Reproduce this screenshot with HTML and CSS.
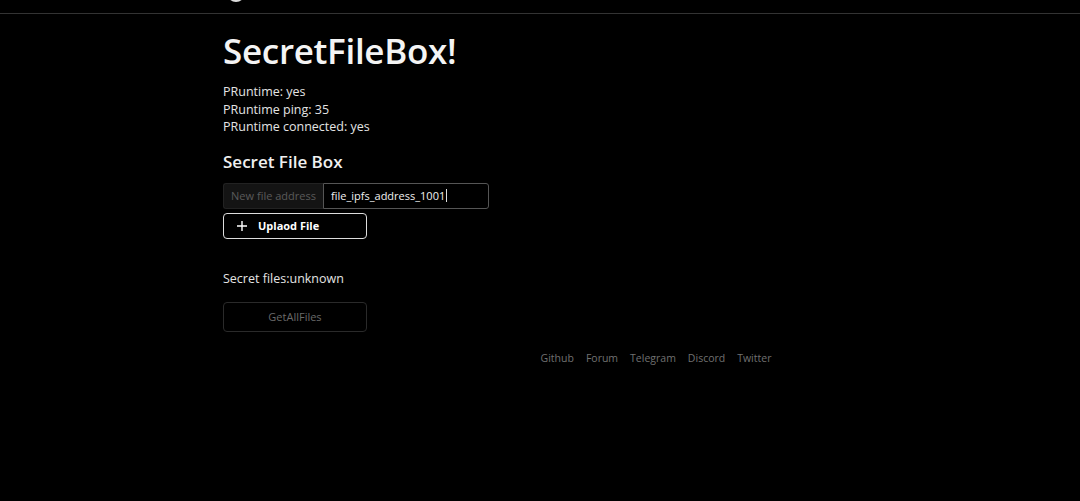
FILE: index.html
```html
<!DOCTYPE html>
<html>
<head>
<meta charset="utf-8">
<link rel="stylesheet" href="styles.css">
</head>
<body>
<header class="topbar">
  <div class="topbar-inner"><span class="logo"></span></div>
</header>
<main class="page">
  <h1 class="title">SecretFileBox!</h1>
  <div class="status">
    <div>PRuntime: yes</div>
    <div>PRuntime ping: 35</div>
    <div>PRuntime connected: yes</div>
  </div>
  <h2 class="section">Secret File Box</h2>
  <div class="input-group">
    <span class="addon">New file address</span>
    <div class="field">file_ipfs_address_1001<span class="caret"></span></div>
  </div>
  <button class="btn btn-primary">
    <svg class="plus" width="12" height="12" viewBox="0 0 12 12"><path d="M6 1v10M1 6h10" stroke="#fff" stroke-width="1.4" fill="none"/></svg>
    <span>Uplaod File</span>
  </button>
  <p class="files">Secret files:unknown</p>
  <button class="btn btn-disabled">GetAllFiles</button>
  <footer class="footer">
    <a>Github</a><a>Forum</a><a>Telegram</a><a>Discord</a><a>Twitter</a>
  </footer>
</main>
</body>
</html>
```
FILE: styles.css
```css
html, body {
  margin: 0;
  padding: 0;
  background: #000;
  color: #e8e8e8;
  font-family: "Open Sans", "Noto Sans", sans-serif;
}
.topbar {
  height: 13px;
  border-bottom: 1px solid #333;
}
.topbar-inner {
  padding-left: 226px;
  position: relative;
  height: 13px;
  overflow: hidden;
}
.logo {
  position: absolute;
  left: 227px;
  top: -16px;
  width: 18px;
  height: 18px;
  border-radius: 50%;
  background: #ddd;
}
.page {
  margin-left: 223px;
  width: 866px;
  display: flex;
  flex-direction: column;
  align-items: flex-start;
}
.title {
  margin: 17px 0 0;
  font-size: 35px;
  font-weight: 600;
  line-height: 40px;
  color: #f4f4f4;
  letter-spacing: -0.3px;
}
.status {
  margin-top: 12px;
  font-size: 12.5px;
  line-height: 17.6px;
  color: #e4e4e4;
}
.section {
  margin: 15px 0 0;
  font-size: 17px;
  font-weight: 600;
  line-height: 22px;
  color: #f0f0f0;
}
.input-group {
  margin-top: 10px;
  display: flex;
  height: 26px;
  width: 266px;
}
.addon {
  width: 100px;
  box-sizing: border-box;
  background: #141414;
  border: 1px solid #222;
  border-right: none;
  border-radius: 3px 0 0 3px;
  color: #5a5a5a;
  font-size: 11px;
  line-height: 24px;
  text-align: center;
}
.field {
  flex: 1;
  box-sizing: border-box;
  border: 1px solid #555;
  border-radius: 0 3px 3px 0;
  font-size: 11px;
  line-height: 24px;
  padding-left: 7px;
  color: #f0f0f0;
  display: flex;
  align-items: center;
}
.caret {
  display: inline-block;
  width: 1px;
  height: 13px;
  background: #ddd;
  margin-left: 1px;
}
.btn {
  font-family: inherit;
  box-sizing: border-box;
  width: 144px;
  background: #000;
  border-radius: 4px;
  display: flex;
  align-items: center;
  justify-content: center;
  padding: 0;
}
.btn-primary {
  margin-top: 4px;
  height: 26px;
  border: 1px solid #ddd;
  color: #fff;
  font-size: 11px;
  font-weight: 700;
  justify-content: flex-start;
  padding-left: 12px;
  gap: 10px;
}
.plus { display: block; }
.files {
  margin: 31px 0 0;
  font-size: 12.5px;
  line-height: 17px;
  color: #e4e4e4;
}
.btn-disabled {
  margin-top: 15px;
  height: 30px;
  border: 1px solid #2a2a2a;
  color: #6a6a6a;
  font-size: 11px;
}
.footer {
  margin-top: 19px;
  align-self: stretch;
  display: flex;
  justify-content: center;
  gap: 12px;
  font-size: 10.5px;
  color: #707070;
}
```
